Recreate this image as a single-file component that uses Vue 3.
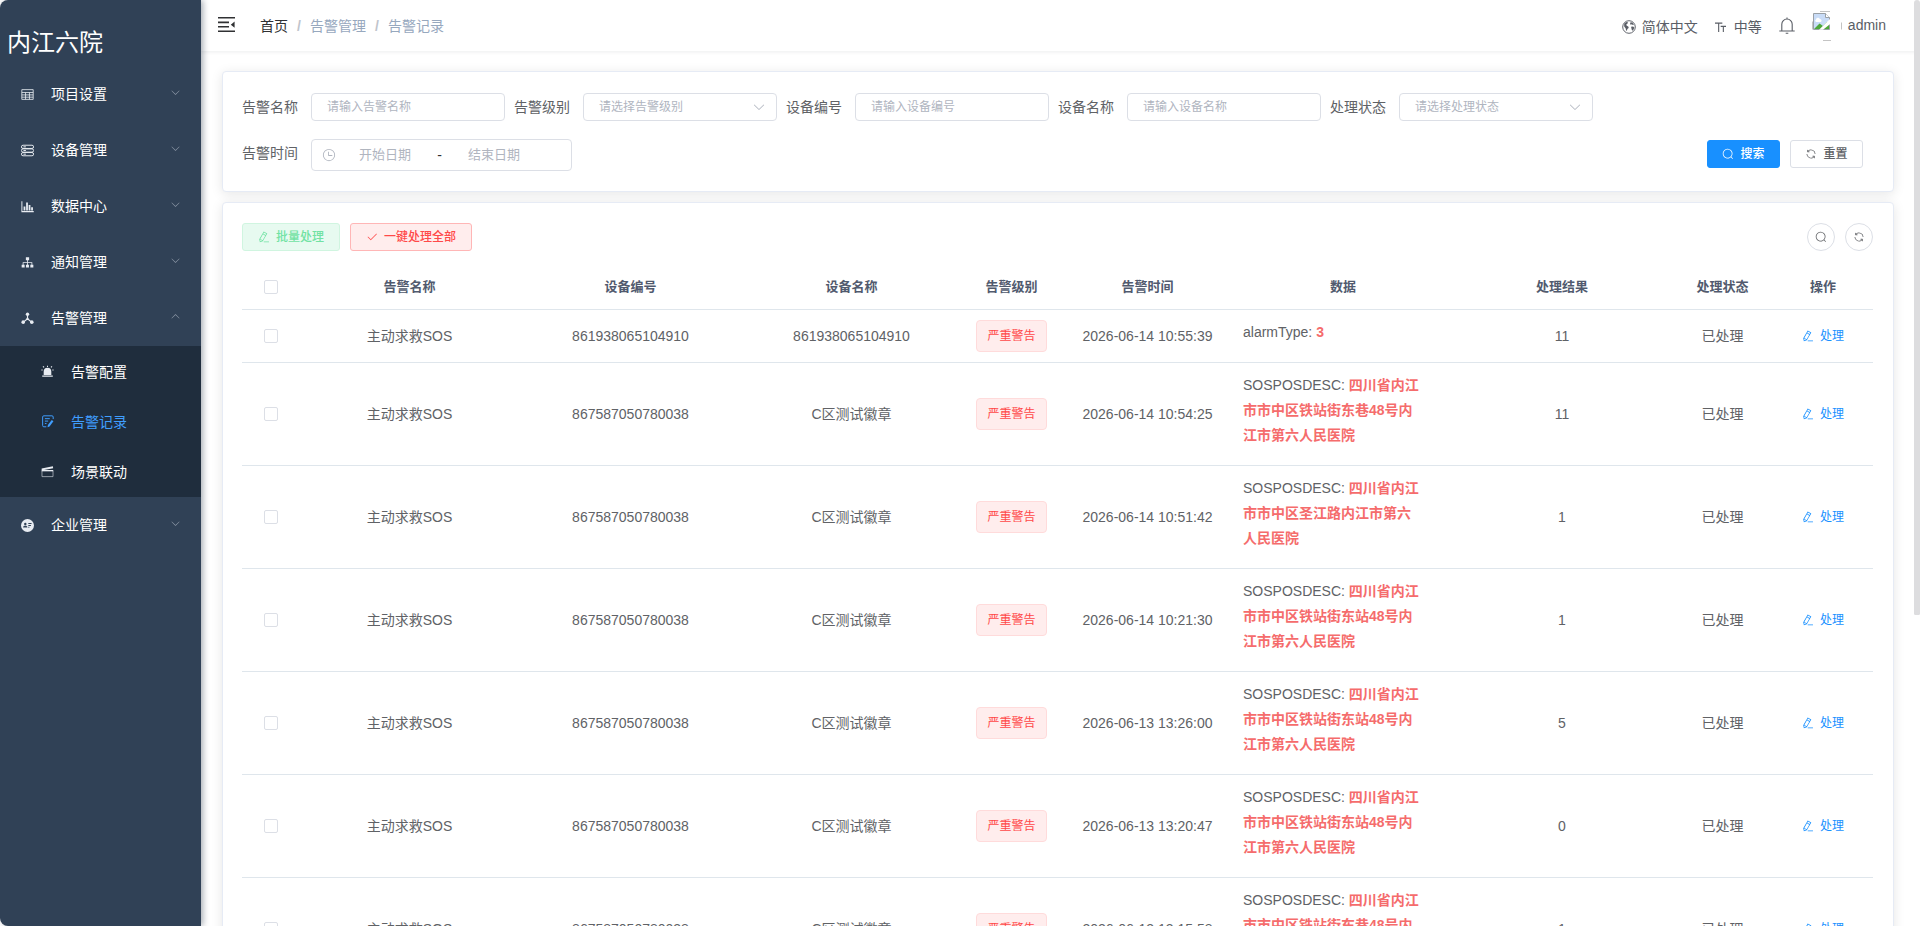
<template>
  <div class="app-wrapper">
    <aside class="sidebar">
      <h1 class="sidebar-title">内江六院</h1>
      <template v-for="item in menus" :key="item.title">
        <div class="menu-item">
          <svg class="menu-icon" viewBox="0 0 16 16" v-html="icons[item.icon]"></svg>
          <span class="menu-text">{{ item.title }}</span>
          <svg class="menu-arrow" :class="{ opened: item.children }" viewBox="0 0 1024 1024"><path :d="paths.arrow" /></svg>
        </div>
        <div v-if="item.children" class="submenu">
          <div v-for="sub in item.children" :key="sub.title" class="submenu-item" :class="{ active: sub.active }">
            <svg class="menu-icon" viewBox="0 0 16 16" v-html="icons[sub.icon]"></svg>
            <span class="menu-text">{{ sub.title }}</span>
          </div>
        </div>
      </template>
    </aside>

    <div class="main">
      <header class="navbar">
        <svg class="hamburger" viewBox="0 0 18 16">
          <path d="M0 0h17v1.600H0zM0 4.600h11v1.600H0zM0 9h11v1.600H0zM0 13.400h17v1.600H0zM16.600 4.600v6.200L12.800 7.700z" />
        </svg>
        <nav class="breadcrumb">
          <span class="home">首页</span><i>/</i><span>告警管理</span><i>/</i><span>告警记录</span>
        </nav>
        <div class="right-menu">
          <div class="right-item lang">
            <svg class="globe" viewBox="0 0 16 16">
              <circle cx="8" cy="8" r="7.2" fill="none" stroke="currentColor" stroke-width="1.1" />
              <path d="M2.500 4.200 5 2.200l1.800.4-.4 1.400-1.500 1 .3 1.400 2.200 1.200.2 1.400-1.500 1.200-.5 2-.9-.3-.6-2.600L2.500 7.400zM9.800 2.600l2 .3 1.900 2.600-1.400.3-1-.9-1.400.5-.7-1.200zM10.400 7.700l2.200-.3 1.500 1.200-1 2.400-1.500 1.300-.7-2z" />
            </svg>
            <span>简体中文</span>
          </div>
          <div class="right-item size">
            <svg class="font-size" viewBox="0 0 12 12">
              <path d="M0 .5h8v1.300H4.600V11H3.400V1.800H0zM6.200 4.200H12v1.200H9.700V11H8.500V5.400H6.200z" />
            </svg>
            <span>中等</span>
          </div>
          <svg class="bell" viewBox="0 0 16 17">
            <path d="M8 .4v1.4M2.800 14V7.200a5.200 5.200 0 0 1 10.400 0V14M.3 14h15.4M6.700 16.200h2.600" fill="none" stroke="currentColor" stroke-width="1.1" />
          </svg>
          <!-- avatar placeholder: the photo has not loaded -->
          <svg class="avatar" viewBox="0 0 30 32">
            <path d="M1.500 3.500h12l4 4v12h-16z" fill="#c9dcf7" stroke="#9aa0a6" />
            <path d="M13.500 3.500v4h4" fill="#fff" stroke="#9aa0a6" />
            <path d="M4 9.500a2 2 0 0 1 3.800-.6A1.800 1.800 0 0 1 9 12H4.500A1.300 1.300 0 0 1 4 9.500z" fill="#fff" />
            <path d="m2 19 5.500-5.500L11 16l4-4 2 2v5z" fill="#4ea83b" />
            <path d="M18.500 8.500 7 19.800h4l7.500-6z" fill="#fff" />
            <path d="M8 1.500h10M11 30.500h8M.5 11.500v8M29.500 12.500v7" stroke="#c4c4c4" fill="none" />
          </svg>
          <span class="user-name">admin</span>
        </div>
      </header>

      <section class="card search-card">
        <div class="search-form">
          <div v-for="field in fields" :key="field.label" class="form-item">
            <label>{{ field.label }}</label>
            <div class="input">
              <span>{{ field.placeholder }}</span>
              <svg v-if="field.select" class="select-arrow" viewBox="0 0 1024 1024"><path :d="paths.arrow" /></svg>
            </div>
          </div>
        </div>
        <div class="search-form second">
          <div class="form-item">
            <label>告警时间</label>
            <div class="date-range">
              <svg class="clock" viewBox="0 0 1024 1024"><path :d="paths.clock" /></svg>
              <span class="date-text">开始日期</span>
              <span class="date-sep">-</span>
              <span class="date-text">结束日期</span>
            </div>
          </div>
          <div class="form-btns">
            <button class="btn primary">
              <svg viewBox="0 0 1024 1024"><path :d="paths.search" /></svg>搜索
            </button>
            <button class="btn">
              <svg viewBox="0 0 1024 1024"><path :d="paths.refresh" /></svg>重置
            </button>
          </div>
        </div>
      </section>

      <section class="card table-card">
        <div class="toolbar">
          <button class="btn success" disabled>
            <svg viewBox="0 0 1024 1024"><path :d="paths.edit" /></svg>批量处理
          </button>
          <button class="btn danger">
            <svg viewBox="0 0 1024 1024"><path :d="paths.check" /></svg>一键处理全部
          </button>
          <div class="tools">
            <button class="btn circle"><svg viewBox="0 0 1024 1024"><path :d="paths.search" /></svg></button>
            <button class="btn circle"><svg viewBox="0 0 1024 1024"><path :d="paths.refresh" /></svg></button>
          </div>
        </div>

        <div class="table">
          <div class="tr thead">
            <div class="td"><span class="checkbox"></span></div>
            <div v-for="col in columns" :key="col" class="td">{{ col }}</div>
          </div>
          <div v-for="(row, i) in rows" :key="i" class="tr" :class="{ short: row.key === 'alarmType' }">
            <div class="td"><span class="checkbox"></span></div>
            <div class="td">主动求救SOS</div>
            <div class="td">{{ row.code }}</div>
            <div class="td">{{ row.name }}</div>
            <div class="td"><span class="tag">严重警告</span></div>
            <div class="td">{{ row.time }}</div>
            <div class="td data">
              <p>{{ row.key }}: <b>{{ row.value }}</b></p>
            </div>
            <div class="td">{{ row.result }}</div>
            <div class="td">已处理</div>
            <div class="td">
              <a class="link"><svg viewBox="0 0 1024 1024"><path :d="paths.edit" /></svg>处理</a>
            </div>
          </div>
        </div>
      </section>
    </div>
    <div class="scroll-thumb"></div>
  </div>
</template>

<script setup>
import { ref } from 'vue'

const paths = {
  arrow: 'M831.872 340.864 512 652.672 192.128 340.864a30.592 30.592 0 0 0-42.752 0 29.12 29.12 0 0 0 0 41.6L489.664 714.24a32 32 0 0 0 44.672 0l340.288-331.712a29.12 29.12 0 0 0 0-41.728 30.592 30.592 0 0 0-42.752 0z',
  search: 'm795.904 750.72 124.992 124.928a32 32 0 0 1-45.248 45.248L750.656 795.904a416 416 0 1 1 45.248-45.248zM480 832a352 352 0 1 0 0-704 352 352 0 0 0 0 704z',
  refresh: 'M771.776 794.88A384 384 0 0 1 128 512h64a320 320 0 0 0 555.712 216.448H654.72a32 32 0 1 1 0-64h149.056a32 32 0 0 1 32 32v148.928a32 32 0 1 1-64 0v-50.56zM276.288 295.616h92.992a32 32 0 0 1 0 64H220.16a32 32 0 0 1-32-32V178.56a32 32 0 0 1 64 0v50.56A384 384 0 0 1 896.128 512h-64a320 320 0 0 0-555.776-216.384z',
  check: 'M406.656 706.944 195.84 496.256a32 32 0 1 0-45.248 45.248l256 256 512-512a32 32 0 0 0-45.248-45.248L406.592 706.944z',
  edit: 'm199.04 672.64 193.984 112 224-387.968-193.92-112-224 388.032zm-23.872 60.16 32.896 148.288 144.896-45.696L175.168 732.8zM455.04 229.248l193.92 112 56.704-98.112-193.984-112-56.64 98.112zM104.32 708.8l384-665.024 304.768 175.936L409.152 884.8h.064l-248.448 78.336L104.32 708.8zm384 254.272v-64h448v64h-448z',
  clock: 'M512 896a384 384 0 1 0 0-768 384 384 0 0 0 0 768zm0 64a448 448 0 1 1 0-896 448 448 0 0 1 0 896zM480 256a32 32 0 0 1 32 32v256a32 32 0 0 1-64 0V288a32 32 0 0 1 32-32zM480 512h256q32 0 32 32t-32 32H480q-32 0-32-32t32-32z'
}

const icons = {
  table: '<path d="M1 2h14v12H1zM1 5.500h14M1 8.500h14M1 11.300h14M5.600 5.500V14M10.400 5.500V14" fill="none" stroke="currentColor" stroke-width="1"/>',
  server: '<path d="M2.500 1.500h11a1.300 1.300 0 0 1 0 4h-11a1.300 1.300 0 0 1 0-4zM2.500 6h11a1.300 1.300 0 0 1 0 4h-11a1.300 1.300 0 0 1 0-4zM2.500 10.500h11a1.300 1.300 0 0 1 0 4h-11a1.300 1.300 0 0 1 0-4zM3 3.500h3M3 8h3M3 12.500h3" fill="none" stroke="currentColor" stroke-width="1.200"/>',
  chart: '<path d="M.5 1.500h1.200v12h14V15H.5zM3.200 8h2.200v4.800H3.200zM6.300 3h2.200v9.800H6.300zM9.400 6h2.200v6.800H9.400zM12.500 9h2.200v3.800h-2.200z"/>',
  tree: '<path d="M6 1.500h4v3.800H6zM.8 10.700h3.700v3.600H.8zM6.100 10.700h3.700v3.600H6.100zM11.500 10.700h3.700v3.600h-3.700zM7.500 5.300h1V7.600H13.900v3.100h-1V8.600H8.500v2.100h-1V8.600H3.100v2.100h-1V7.600h5.400z"/>',
  share: '<path d="M8 2.800v5.500M8 8.300 3 12.500M8 8.300l5 4.200" stroke="currentColor" stroke-width="1.400" fill="none"/><circle cx="8" cy="2.800" r="2.100"/><circle cx="2.700" cy="12.500" r="2.200"/><circle cx="13.300" cy="12.500" r="2.200"/><circle cx="8" cy="8.500" r="1.400"/>',
  company: '<path fill-rule="evenodd" d="M8 0a8 8 0 1 1 0 16A8 8 0 0 1 8 0zM5.300 4.600a1.500 1.500 0 1 0 0 3 1.500 1.500 0 0 0 0-3zM2.600 10.600h5.200V9.400L6.500 8.400H4L2.600 9.400zM9 4.900v1.300h4V4.900zM9 7.500v1.200h3.200V7.500zM9 9.500v1.200h1.300V9.500z"/>',
  alarm: '<path d="M3.300 12.300V8.200a4.700 4.700 0 0 1 9.400 0v4.100zM1.500 13h13v1.600h-13zM7.400.8h1.200v1.700H7.400zM2 2l1-.8 1.200 1.300-1 .8zM14 2l-1-.8-1.200 1.300 1 .8zM.5 5.500h1.500v1.200H.5zM14 5.500h1.500v1.200H14z"/>',
  log: '<path d="M6.500 14.500H3.500a1.500 1.500 0 0 1-1.500-1.500V2.500A1.500 1.500 0 0 1 3.500 1h10A1.500 1.500 0 0 1 15 2.500V5M4.800 4.500h6M4.800 7.500h4M4.800 10.500h2" fill="none" stroke="currentColor" stroke-width="1.200"/><path d="M13.200 6 15.300 7.700l-4.800 6.300-2.500 1.200.5-2.900z"/>',
  scene: '<path d="M1.200 7h13.600v7.300H1.200z" fill="none" stroke="currentColor" stroke-opacity=".7"/><path d="M.8 4.200 14.600 1.500l.4 2.400L3.800 6.200H15v1.600H.8z"/>'
}

const menus = ref([
  { title: '项目设置', icon: 'table' },
  { title: '设备管理', icon: 'server' },
  { title: '数据中心', icon: 'chart' },
  { title: '通知管理', icon: 'tree' },
  {
    title: '告警管理',
    icon: 'share',
    children: [
      { title: '告警配置', icon: 'alarm' },
      { title: '告警记录', icon: 'log', active: true },
      { title: '场景联动', icon: 'scene' }
    ]
  },
  { title: '企业管理', icon: 'company' }
])

const fields = [
  { label: '告警名称', placeholder: '请输入告警名称' },
  { label: '告警级别', placeholder: '请选择告警级别', select: true },
  { label: '设备编号', placeholder: '请输入设备编号' },
  { label: '设备名称', placeholder: '请输入设备名称' },
  { label: '处理状态', placeholder: '请选择处理状态', select: true }
]

const columns = ['告警名称', '设备编号', '设备名称', '告警级别', '告警时间', '数据', '处理结果', '处理状态', '操作']

const sos = (time, value, result) => ({
  code: '867587050780038',
  name: 'C区测试徽章',
  time,
  key: 'SOSPOSDESC',
  value,
  result
})

const rows = ref([
  { code: '861938065104910', name: '861938065104910', time: '2026-06-14 10:55:39', key: 'alarmType', value: '3', result: '11' },
  sos('2026-06-14 10:54:25', '四川省内江市市中区铁站街东巷48号内江市第六人民医院', '11'),
  sos('2026-06-14 10:51:42', '四川省内江市市中区圣江路内江市第六人民医院', '1'),
  sos('2026-06-14 10:21:30', '四川省内江市市中区铁站街东站48号内江市第六人民医院', '1'),
  sos('2026-06-13 13:26:00', '四川省内江市市中区铁站街东站48号内江市第六人民医院', '5'),
  sos('2026-06-13 13:20:47', '四川省内江市市中区铁站街东站48号内江市第六人民医院', '0'),
  sos('2026-06-13 13:15:58', '四川省内江市市中区铁站街东巷48号内江市第六人民医院', '1')
])
</script>

<style>
body {
  margin: 0;
  overflow: hidden;
}
</style>

<style scoped>
* {
  box-sizing: border-box;
}

.app-wrapper {
  position: relative;
  display: flex;
  height: 926px;
  overflow: hidden;
  background: #fff;
  color: #606266;
  font-family: "Liberation Sans", "Noto Sans CJK SC", sans-serif;
  font-size: 14px;
  line-height: 20px;
}

svg {
  display: block;
  flex: none;
  fill: currentColor;
}

.sidebar {
  width: 201px;
  flex: none;
  background: #304156;
  border-radius: 8px 0 0 8px;
  box-shadow: 2px 0 6px rgba(0, 21, 41, 0.35);
  color: #fff;
  z-index: 2;
}

.sidebar-title {
  margin: 0;
  height: 66px;
  padding: 18px 0 0 7px;
  font-size: 24px;
  font-weight: 400;
  line-height: 50px;
}

.menu-item {
  display: flex;
  align-items: center;
  height: 56.1px;
  padding: 0 20px 0 21px;
}

.menu-icon {
  width: 13px;
  height: 13px;
  color: #e8ecf2;
}

.menu-item .menu-text {
  margin-left: 17px;
}

.menu-arrow {
  width: 11px;
  height: 11px;
  margin: -3px 0 0 auto;
  color: #8e99a8;
}

.menu-arrow.opened {
  transform: rotate(180deg);
}

.submenu {
  background: #1f2d3d;
}

.submenu-item {
  display: flex;
  align-items: center;
  height: 50.2px;
  padding-left: 41px;
}

.submenu-item .menu-text {
  margin-left: 17px;
}

.submenu-item.active,
.submenu-item.active .menu-icon {
  color: #409eff;
}

.main {
  flex: 1;
  min-width: 0;
}

.navbar {
  display: flex;
  align-items: center;
  height: 51px;
  padding: 0 34px 0 17px;
  box-shadow: 0 1px 4px rgba(0, 21, 41, 0.08);
}

.hamburger {
  width: 18px;
  height: 16px;
  margin-top: -2px;
  color: #303133;
}

.breadcrumb {
  display: flex;
  margin-left: 24px;
  color: #97a8be;
}

.breadcrumb .home {
  color: #303133;
}

.breadcrumb i {
  width: 22px;
  font-style: normal;
  font-weight: 700;
  text-align: center;
  color: #c0c4cc;
}

.right-menu {
  display: flex;
  align-items: center;
  margin-left: auto;
  color: #5a5e66;
}

.right-item {
  display: flex;
  align-items: center;
  padding-top: 2px;
}

.globe {
  width: 14px;
  height: 14px;
  margin-right: 6px;
}

.font-size {
  width: 11px;
  height: 11px;
  margin: 1px 8px 0 17px;
}

.bell {
  width: 16px;
  height: 17px;
  margin-left: 17px;
}

.avatar {
  width: 30px;
  height: 32px;
  margin: 0 6px 0 17px;
}

.user-name {
  margin-top: -1px;
}

.card {
  margin: 0 26px 0 21px;
  border: 1px solid #e6ebf5;
  border-radius: 4px;
  background: #fff;
  box-shadow: 0 2px 12px rgba(0, 0, 0, 0.1);
}

.search-card {
  height: 121px;
  margin-top: 20px;
  padding: 21px 30px 0 19px;
}

.search-form {
  display: flex;
  gap: 9px;
}

.search-form.second {
  justify-content: space-between;
  margin-top: 18px;
}

.form-item {
  display: flex;
}

.form-item label {
  width: 69px;
  height: 28px;
  line-height: 28px;
}

.input {
  display: flex;
  align-items: center;
  justify-content: space-between;
  width: 194px;
  height: 28px;
  padding: 0 10px 0 15px;
  border: 1px solid #dcdfe6;
  border-radius: 4px;
  color: #b0b5bf;
  font-size: 12px;
}

.select-arrow {
  width: 14px;
  height: 14px;
}

.date-range {
  display: flex;
  align-items: center;
  width: 261px;
  height: 32px;
  padding-left: 10px;
  border: 1px solid #dcdfe6;
  border-radius: 4px;
  color: #b0b5bf;
  font-size: 13px;
}

.clock {
  width: 14px;
  height: 14px;
}

.date-text {
  width: 98px;
  text-align: center;
}

.date-sep {
  width: 11px;
  color: #303133;
  font-size: 14px;
  text-align: center;
}

.form-btns {
  display: flex;
  gap: 10px;
  padding-top: 1px;
}

.btn {
  display: flex;
  align-items: center;
  justify-content: center;
  gap: 6px;
  height: 28px;
  padding: 0;
  border: 1px solid #dcdfe6;
  border-radius: 3px;
  background: #fff;
  color: #606266;
  font-family: inherit;
  font-size: 12px;
  font-weight: 500;
  line-height: 1;
  white-space: nowrap;
}

.btn svg {
  width: 12px;
  height: 12px;
}

.form-btns .btn {
  width: 73px;
}

.btn.primary {
  border-color: #1890ff;
  background: #1890ff;
  color: #fff;
}

.btn.success {
  border-color: #d0f5e0;
  background: #e7faf0;
  color: #71e2a3;
}

.btn.danger {
  border-color: #ffb6b6;
  background: #ffeded;
  color: #ff4949;
}

.btn.circle {
  width: 28px;
  border-radius: 50%;
}

.table-card {
  height: 760px;
  margin-top: 10px;
  padding: 20px 20px 0 19px;
}

.toolbar {
  display: flex;
  gap: 10px;
}

.toolbar > .btn.success {
  width: 98px;
}

.toolbar > .btn.danger {
  width: 122px;
}

.tools {
  display: flex;
  gap: 10px;
  margin-left: auto;
}

.table {
  margin-top: 14px;
}

.tr {
  display: grid;
  grid-template-columns: 57px 221px 221px 221px 99px 173px 218px 220px 101px 100px;
  align-items: center;
  height: 103px;
  border-bottom: 1px solid #dfe6ec;
}

.tr.thead {
  height: 45px;
  color: #515a6e;
  font-size: 13px;
  font-weight: 700;
}

.tr.short {
  height: 53px;
}

.td {
  display: flex;
  justify-content: center;
  align-items: center;
}

.td.data {
  align-self: start;
  justify-content: flex-start;
  padding: 10px 0 0 9px;
}

.data p {
  width: 181px;
  margin: 0;
  line-height: 25.2px;
  word-break: break-all;
}

.data b {
  color: #f56c6c;
}

.checkbox {
  width: 14px;
  height: 14px;
  border: 1px solid #dcdfe6;
  border-radius: 2px;
}

.tag {
  width: 71px;
  height: 32px;
  border: 1px solid #ffdbdb;
  border-radius: 4px;
  background: #ffeded;
  color: #ff4949;
  font-size: 12px;
  line-height: 30px;
  text-align: center;
}

.link {
  display: flex;
  align-items: center;
  gap: 6px;
  color: #1890ff;
  font-size: 12px;
}

.link svg {
  width: 12px;
  height: 12px;
}

/* thumb floats over the page's right edge */
.scroll-thumb {
  position: absolute;
  top: 0;
  right: 0;
  width: 6px;
  height: 615px;
  border-radius: 6px 6px 3px 3px;
  background: #dddddf;
}
</style>
